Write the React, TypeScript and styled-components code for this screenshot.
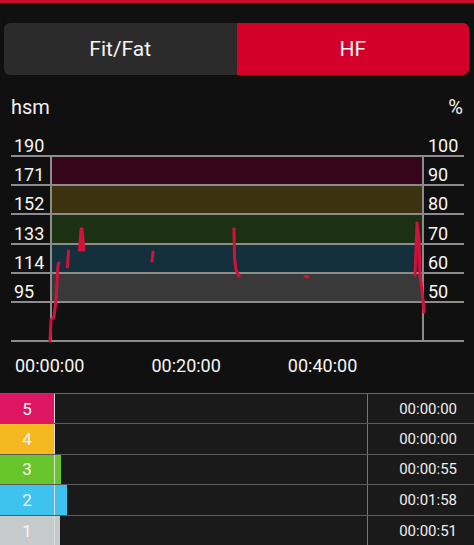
import styled, { createGlobalStyle } from 'styled-components'

interface Band {
  left: string
  right: string
  color?: string
  height: number
}

interface Zone {
  id: number
  color: string
  seconds: number
}

const bands: Band[] = [
  { left: '190', right: '100', height: 20 },
  { left: '171', right: '90', color: '#37061a', height: 29.2 },
  { left: '152', right: '80', color: '#3d3210', height: 29.2 },
  { left: '133', right: '70', color: '#1b3111', height: 29.2 },
  { left: '114', right: '60', color: '#13303c', height: 29.2 },
  { left: '95', right: '50', color: '#393939', height: 29.2 },
  { left: '', right: '', color: '#111111', height: 39 },
]

const zones: Zone[] = [
  { id: 5, color: '#de1560', seconds: 0 },
  { id: 4, color: '#f6b821', seconds: 0 },
  { id: 3, color: '#68c52c', seconds: 55 },
  { id: 2, color: '#3ec3ee', seconds: 118 },
  { id: 1, color: '#c6caca', seconds: 51 },
]

// Heart rate trace, in plot coordinates (0,0 = top-left of the 190 line).
const traces = [
  'M0 185 L1 164 L4 161 L6 144 L8 109 L9 107',
  'M18.5 95 L17.5 111',
  'M31 73 L29.5 94 L34 94 L32 73 Z',
  'M103 96 L102 105',
  'M184 73 L184.5 101 L186 114 L189 120',
  'M255 120.5 L258 121',
  'M365 119 L367 67 L369 84 L370 119 L372 134 L374 156',
]

const SESSION_SECONDS = 3000

const formatDuration = (total: number): string => {
  const pad = (value: number) => String(value).padStart(2, '0')
  const hours = Math.floor(total / 3600)
  const minutes = Math.floor((total % 3600) / 60)
  return `${pad(hours)}:${pad(minutes)}:${pad(total % 60)}`
}

const GlobalStyle = createGlobalStyle`
  body {
    margin: 0;
    background: #101010;
    font-family: Roboto, "Liberation Sans", sans-serif;
    color: #f2f2f2;
  }
`

export default function App() {
  return (
    <Screen>
      <GlobalStyle />
      <TopBar />

      <Toggle>
        <ToggleOption>Fit/Fat</ToggleOption>
        <ToggleOption $active>HF</ToggleOption>
      </Toggle>

      <AxisHeader>
        <span>hsm</span>
        <span>%</span>
      </AxisHeader>

      <Chart>
        {bands.map((band, index) => (
          <ChartRow key={index} $height={band.height}>
            <AxisLabel>{band.left}</AxisLabel>
            <PlotCell $color={band.color} $framed={index > 0} />
            <AxisLabel $right>{band.right}</AxisLabel>
          </ChartRow>
        ))}

        <Curve viewBox="0 0 374 185" preserveAspectRatio="none">
          {traces.map((d, index) => (
            <path key={index} d={d} />
          ))}
        </Curve>
      </Chart>

      <TimeAxis>
        <span>00:00:00</span>
        <span>00:20:00</span>
        <span>00:40:00</span>
      </TimeAxis>

      <ZoneTable>
        {zones.map((zone) => (
          <ZoneRow key={zone.id}>
            <ZoneBadge $color={zone.color}>{zone.id}</ZoneBadge>
            <BarTrack>
              <Bar
                $color={zone.color}
                style={{ width: `${(zone.seconds / SESSION_SECONDS) * 100}%` }}
              />
            </BarTrack>
            <ZoneTime>{formatDuration(zone.seconds)}</ZoneTime>
          </ZoneRow>
        ))}
      </ZoneTable>
    </Screen>
  )
}

const Screen = styled.main`
  width: 474px;
  height: 545px;
  overflow: hidden;
  background: #101010;
`

const TopBar = styled.div`
  height: 3px;
  background: #c8102e;
`

const Toggle = styled.div`
  display: flex;
  height: 52px;
  margin: 20px 5px 0 4px;
  border-radius: 6px;
  overflow: hidden;
  background: #2b2b2b;
`

const ToggleOption = styled.div<{ $active?: boolean }>`
  flex: 1;
  display: flex;
  align-items: center;
  justify-content: center;
  font-size: 21px;
  color: #f4f4f4;
  background: ${({ $active }) => ($active ? '#d3002a' : 'transparent')};
`

const AxisHeader = styled.div`
  display: flex;
  justify-content: space-between;
  height: 24px;
  margin-top: 20px;
  padding: 0 11px 0 11px;
  font-size: 20px;
  line-height: 24px;
`

const Chart = styled.div`
  position: relative;
  margin: 18px 10px 0 11px;
`

const ChartRow = styled.div<{ $height: number }>`
  display: flex;
  box-sizing: border-box;
  height: ${({ $height }) => $height}px;
  border-bottom: 2px solid #8c8c8c;
`

const AxisLabel = styled.div<{ $right?: boolean }>`
  display: flex;
  align-items: flex-end;
  width: ${({ $right }) => ($right ? '40px' : '39px')};
  box-sizing: border-box;
  padding-left: ${({ $right }) => ($right ? '4px' : '3px')};
  font-size: 18px;
  line-height: 18px;
  color: #f6f6f6;
`

const PlotCell = styled.div<{ $color?: string; $framed: boolean }>`
  width: 374px;
  box-sizing: border-box;
  background: ${({ $color }) => $color ?? 'transparent'};
  border-left: 2px solid ${({ $framed }) => ($framed ? '#8c8c8c' : 'transparent')};
  border-right: 2px solid ${({ $framed }) => ($framed ? '#8c8c8c' : 'transparent')};
`

const Curve = styled.svg`
  position: absolute;
  left: 39px;
  top: 19px;
  width: 374px;
  height: 185px;
  overflow: visible;

  path {
    fill: #d3123c;
    fill-opacity: 0;
    stroke: #d3123c;
    stroke-width: 3;
    stroke-linejoin: round;
    stroke-linecap: round;
  }

  path:nth-child(3) {
    fill-opacity: 1;
  }
`

const TimeAxis = styled.div`
  display: flex;
  gap: 67px;
  margin-top: 15px;
  padding-left: 15px;
  font-size: 18px;
  line-height: 18px;
  color: #f6f6f6;
`

const ZoneTable = styled.section`
  margin-top: 18px;
  border-top: 1px solid #666666;
`

const ZoneRow = styled.div`
  display: flex;
  box-sizing: border-box;
  height: 30.4px;
  border-bottom: 1px solid #5a5a5a;
  background: #1a1a1a;

  &:last-child {
    border-bottom: none;
  }
`

const ZoneBadge = styled.div<{ $color: string }>`
  display: flex;
  align-items: center;
  justify-content: center;
  width: 55px;
  box-sizing: border-box;
  border-right: 1px solid #dcdcdc;
  background: ${({ $color }) => $color};
  font-size: 17px;
  color: #f6f6f6;
`

const BarTrack = styled.div`
  flex: 1;
  border-right: 1px solid #777777;
`

const Bar = styled.div<{ $color: string }>`
  height: 100%;
  background: ${({ $color }) => $color};
`

const ZoneTime = styled.div`
  display: flex;
  align-items: center;
  justify-content: flex-end;
  width: 106px;
  padding-right: 17px;
  box-sizing: border-box;
  font-size: 15px;
  color: #efefef;
`
